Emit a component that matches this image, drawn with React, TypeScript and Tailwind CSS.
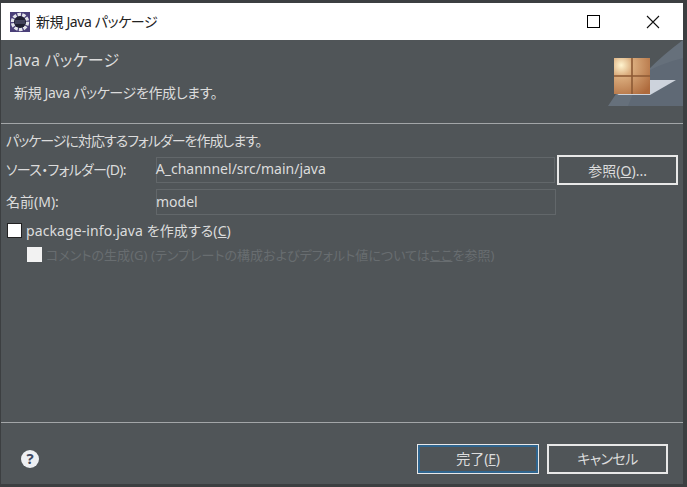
const FONT = "font-['Noto_Sans','Noto_Sans_CJK_JP',sans-serif] [font-feature-settings:'palt']";

const AppIcon = () => (
  <svg width="20" height="20" viewBox="0 0 20 20" className="shrink-0">
    <rect width="20" height="20" fill="#4a3f78" />
    <circle cx="10" cy="10" r="7.4" fill="none" stroke="#e4e4ea" strokeWidth="3.6" strokeDasharray="3.4 1.2" />
    <circle cx="10" cy="10" r="6" fill="#1f1e30" />
    <path d="M5 9h10M5 11h10" stroke="#77739a" strokeWidth="0.8" />
  </svg>
);

const BannerIcon = () => (
  <svg width="75" height="66" viewBox="0 0 75 66" className="block">
    <defs>
      <radialGradient id="glass" cx="0.2" cy="0.2" r="1">
        <stop offset="0" stopColor="#fff4cf" />
        <stop offset="0.3" stopColor="#dcaf80" />
        <stop offset="1" stopColor="#ae6a3c" />
      </radialGradient>
    </defs>
    <path d="M0 66 L8 54 L40 30 Q56 14 75 0 V66 Z" fill="#66707b" />
    <path d="M32 36 Q50 24 75 18 V66 H20 Z" fill="#5f6975" />
    <path d="M9 55 H42 L68 40 H34 Z" fill="#cdd3dc" />
    <rect x="6" y="18" width="36" height="36" fill="url(#glass)" />
    <path d="M24 18v36M6 36h36" stroke="#8d5a35" strokeWidth="1.6" />
  </svg>
);

const Field = ({ value, cls }: { value: string; cls: string }) => (
  <div className={`w-[400px] h-[26px] border border-[#62676a] flex items-center text-[14px] text-[#dcdcdc] leading-none ${cls}`}>
    <span className="-ml-[1px]">{value}</span>
  </div>
);

const Btn = ({ children, cls }: { children: React.ReactNode; cls: string }) => (
  <button className={`h-[30px] flex items-center justify-center text-[14px] text-[#dcdcdc] bg-[#505558] ${cls}`}>
    {children}
  </button>
);

export default function App() {
  return (
    <div className={`w-[687px] h-[487px] overflow-hidden bg-[#3c3f41] pt-[3px] pr-[4px] pl-[1px] ${FONT}`}>
      {/* title bar */}
      <div className="h-[37px] bg-white flex items-center pl-[9px] text-[#222]">
        <AppIcon />
        <span className="ml-[6px] text-[14px] tracking-[-0.4px]">新規 Java パッケージ</span>
        <div className="ml-auto flex items-center">
          <div className="w-[13px] h-[13px] border-[1.5px] border-black mr-[46px]" />
          <svg width="14" height="14" viewBox="0 0 14 14" className="mr-[23px]">
            <path d="M1 1l12 12M13 1L1 13" stroke="#111" strokeWidth="1.1" fill="none" />
          </svg>
        </div>
      </div>

      <div className="h-[444px] flex flex-col bg-[#505558] text-[#dcdcdc]">
        {/* banner */}
        <div className="h-[84px] shrink-0 border-b border-[#a3a6a8] flex justify-between">
          <div className="pl-[8px]">
            <div className="text-[16px] leading-[20px] mt-[10px] tracking-[0.2px]">Java パッケージ</div>
            <div className="text-[14px] leading-[20px] mt-[13px] ml-[5px] tracking-[-0.35px]">新規 Java パッケージを作成します。</div>
          </div>
          <div className="h-[66px] overflow-hidden">
            <BannerIcon />
          </div>
        </div>

        {/* form */}
        <div className="flex-1 pl-[5px] pr-[5px]">
          <div className="text-[14px] leading-[20px] mt-[7px] tracking-[-1px]">パッケージに対応するフォルダーを作成します。</div>
          <div className="flex items-center mt-[4px]">
            <label className="w-[150px] text-[14px] leading-[20px] tracking-[-0.7px]">ソース・フォルダー(D):</label>
            <Field value="A_channnel/src/main/java" cls="pb-[2px]" />
            <Btn cls="w-[121px] ml-[2px] border-2 border-[#e8e8e8]">
              <span>参照(<u>O</u>)...</span>
            </Btn>
          </div>
          <div className="flex items-center mt-[4px]">
            <label className="w-[150px] text-[14px] leading-[20px]">名前(M):</label>
            <Field value="model" cls="pb-[1px]" />
          </div>
          <div className="flex items-center mt-[8px] h-[15px]">
            <div className="w-[15px] h-[15px] bg-white border border-[#222] ml-[1px]" />
            <span className="ml-[4px] text-[14px] leading-[20px] tracking-[0.1px]">package-info.java を作成する(<u>C</u>)</span>
          </div>
          <div className="flex items-center mt-[9px] h-[15px] ml-[21px]">
            <div className="w-[15px] h-[15px] bg-[#f2f2f2]" />
            <span className="ml-[4px] text-[13px] leading-[20px] text-[#686d70] whitespace-nowrap tracking-[0.05px]">
              コメントの生成(G) (テンプレートの構成およびデフォルト値については<u>ここ</u>を参照)
            </span>
          </div>
        </div>

        {/* footer */}
        <div className="h-[62px] shrink-0 border-t border-[#a3a6a8] flex items-center pt-[10px] pl-[20px]">
          <div className="w-[18px] h-[18px] rounded-full bg-[#eef0f3] flex items-center justify-center text-[15px] font-bold leading-none text-[#3f4a63]">
            ?
          </div>
          <div className="ml-auto flex gap-[8px] mr-[15px]">
            <Btn cls="w-[122px] border border-[#e8e8e8] outline-2 outline-[#2f6690] -outline-offset-3">
              <span>完了(<u>F</u>)</span>
            </Btn>
            <Btn cls="w-[121px] border-2 border-[#e8e8e8]">
              <span className="tracking-[-0.6px]">キャンセル</span>
            </Btn>
          </div>
        </div>
      </div>
    </div>
  );
}
